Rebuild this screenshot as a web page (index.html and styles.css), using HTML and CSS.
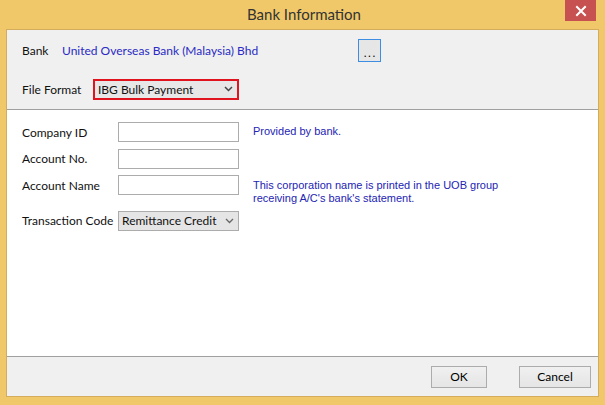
FILE: index.html
```html
<!DOCTYPE html>
<html>
<head>
<meta charset="utf-8">
<link rel="stylesheet" href="styles.css">
</head>
<body>
<div class="window">
  <div class="titlebar">
    <div class="title">Bank Information</div>
    <div class="close">
      <svg width="12" height="12" viewBox="0 0 12 12"><path d="M2 2 L10 10 M10 2 L2 10" stroke="#fff" stroke-width="2" stroke-linecap="square"/></svg>
    </div>
  </div>
  <div class="client">
    <div class="top">
      <div class="row bank-row">
        <span class="lbl bank-lbl">Bank</span>
        <span class="bank-name">United Overseas Bank (Malaysia) Bhd</span>
        <button class="dots">...</button>
      </div>
      <div class="row ff-row">
        <span class="lbl ff-lbl">File Format</span>
        <div class="select ff-select"><span>IBG Bulk Payment</span><svg class="chev" width="9" height="6" viewBox="0 0 9 6"><path d="M1 1 L4.5 4.5 L8 1" fill="none" stroke="#444" stroke-width="1.5"/></svg></div>
      </div>
    </div>
    <div class="panel">
      <div class="grid">
        <span class="lbl">Company ID</span>
        <div class="input"></div>
        <span class="note">Provided by bank.</span>

        <span class="lbl">Account No.</span>
        <div class="input"></div>
        <span class="note"></span>

        <span class="lbl">Account Name</span>
        <div class="input"></div>
        <span class="note two">This corporation name is printed in the UOB group<br>receiving A/C's bank's statement.</span>

        <span class="lbl tc-row">Transaction Code</span>
        <div class="select tc-select tc-row"><span>Remittance Credit</span><svg class="chev" width="9" height="6" viewBox="0 0 9 6"><path d="M1 1 L4.5 4.5 L8 1" fill="none" stroke="#666" stroke-width="1.3"/></svg></div>
        <span class="note tc-row"></span>
      </div>
    </div>
    <div class="bottom">
      <button class="btn ok">OK</button>
      <button class="btn cancel">Cancel</button>
    </div>
  </div>
</div>
</body>
</html>
```

FILE: styles.css
```css
* { box-sizing: border-box; }
html, body { margin: 0; padding: 0; }
body {
  width: 605px;
  height: 405px;
  overflow: hidden;
  background: #f0c86a;
  font-family: "Lato", "Noto Sans", sans-serif;
  font-size: 12px;
  color: #111;
}
.window {
  width: 605px;
  height: 405px;
  display: flex;
  flex-direction: column;
}
.titlebar {
  height: 29px;
  position: relative;
  display: flex;
  align-items: center;
  justify-content: center;
}
.title {
  font-family: "Lato", sans-serif;
  font-size: 15px;
  color: #333;
  margin-top: -2px;
  margin-left: 3px;
}
.close {
  position: absolute;
  right: 9px;
  top: 0;
  width: 31px;
  height: 21px;
  background: #c75050;
  display: flex;
  align-items: center;
  justify-content: center;
}
.client {
  margin-left: 6px;
  width: 593px;
  height: 368px;
  border: 1px solid #d3ad5c;
  background: #f0f0f0;
  display: flex;
  flex-direction: column;
}
.top {
  height: 79px;
  padding-left: 15px;
  display: flex;
  flex-direction: column;
}
.row { display: flex; align-items: center; }
.bank-row { height: 24px; margin-top: 8px; }
.bank-lbl { width: 40px; }
.bank-name { color: #2a2ac4; width: 296px; }
.dots {
  width: 23px;
  height: 23px;
  padding: 5px 0 0 1px;
  border: 1px solid #3d8ee2;
  background: #e6e6e6;
  font-family: "Liberation Sans", sans-serif;
  font-size: 12px;
  letter-spacing: 1px;
  line-height: 1;
  color: #000;
}
.ff-row { height: 22px; margin-top: 16px; }
.ff-lbl { width: 71px; }
.select {
  display: flex;
  align-items: center;
  justify-content: space-between;
  height: 21px;
}
.ff-select {
  width: 146px;
  border: 2px solid #e0141e;
  background: #e7e7e7;
  padding: 0 4px 0 3px;
}
.panel {
  flex: 1;
  background: #fff;
  border-top: 1px solid #a0a0a0;
  border-bottom: 1px solid #a0a0a0;
}
.grid {
  display: grid;
  grid-template-columns: 96px 121px auto;
  grid-template-rows: 20px 20px 20px 29px;
  row-gap: 6.5px;
  padding: 12px 0 0 15px;
  align-items: center;
}
.input {
  height: 20px;
  border: 1px solid #acacac;
  background: #fff;
}
.tc-select {
  height: 20px;
  border: 1px solid #acacac;
  background: #e5e5e5;
  padding: 0 4px 0 3px;
}
.lbl.tc-row { align-self: end; line-height: 20px; }
.tc-select.tc-row { align-self: end; }
.note {
  font-family: "Liberation Sans", Arial, sans-serif;
  font-size: 11px;
  color: #2424b4;
  align-self: start;
  padding: 3px 0 0 14px;
}
.note.two { line-height: 13px; padding-top: 4px; }
.bottom {
  height: 39px;
  display: flex;
  justify-content: flex-end;
  align-items: center;
  padding-right: 7px;
  gap: 32px;
}
.btn {
  height: 22px;
  border: 1px solid #acacac;
  background: linear-gradient(#f0f0f0, #e5e5e5);
  font-family: "Lato", sans-serif;
  font-size: 12px;
  color: #000;
  padding: 0;
}
.ok { width: 56px; }
.cancel { width: 72px; }
```
